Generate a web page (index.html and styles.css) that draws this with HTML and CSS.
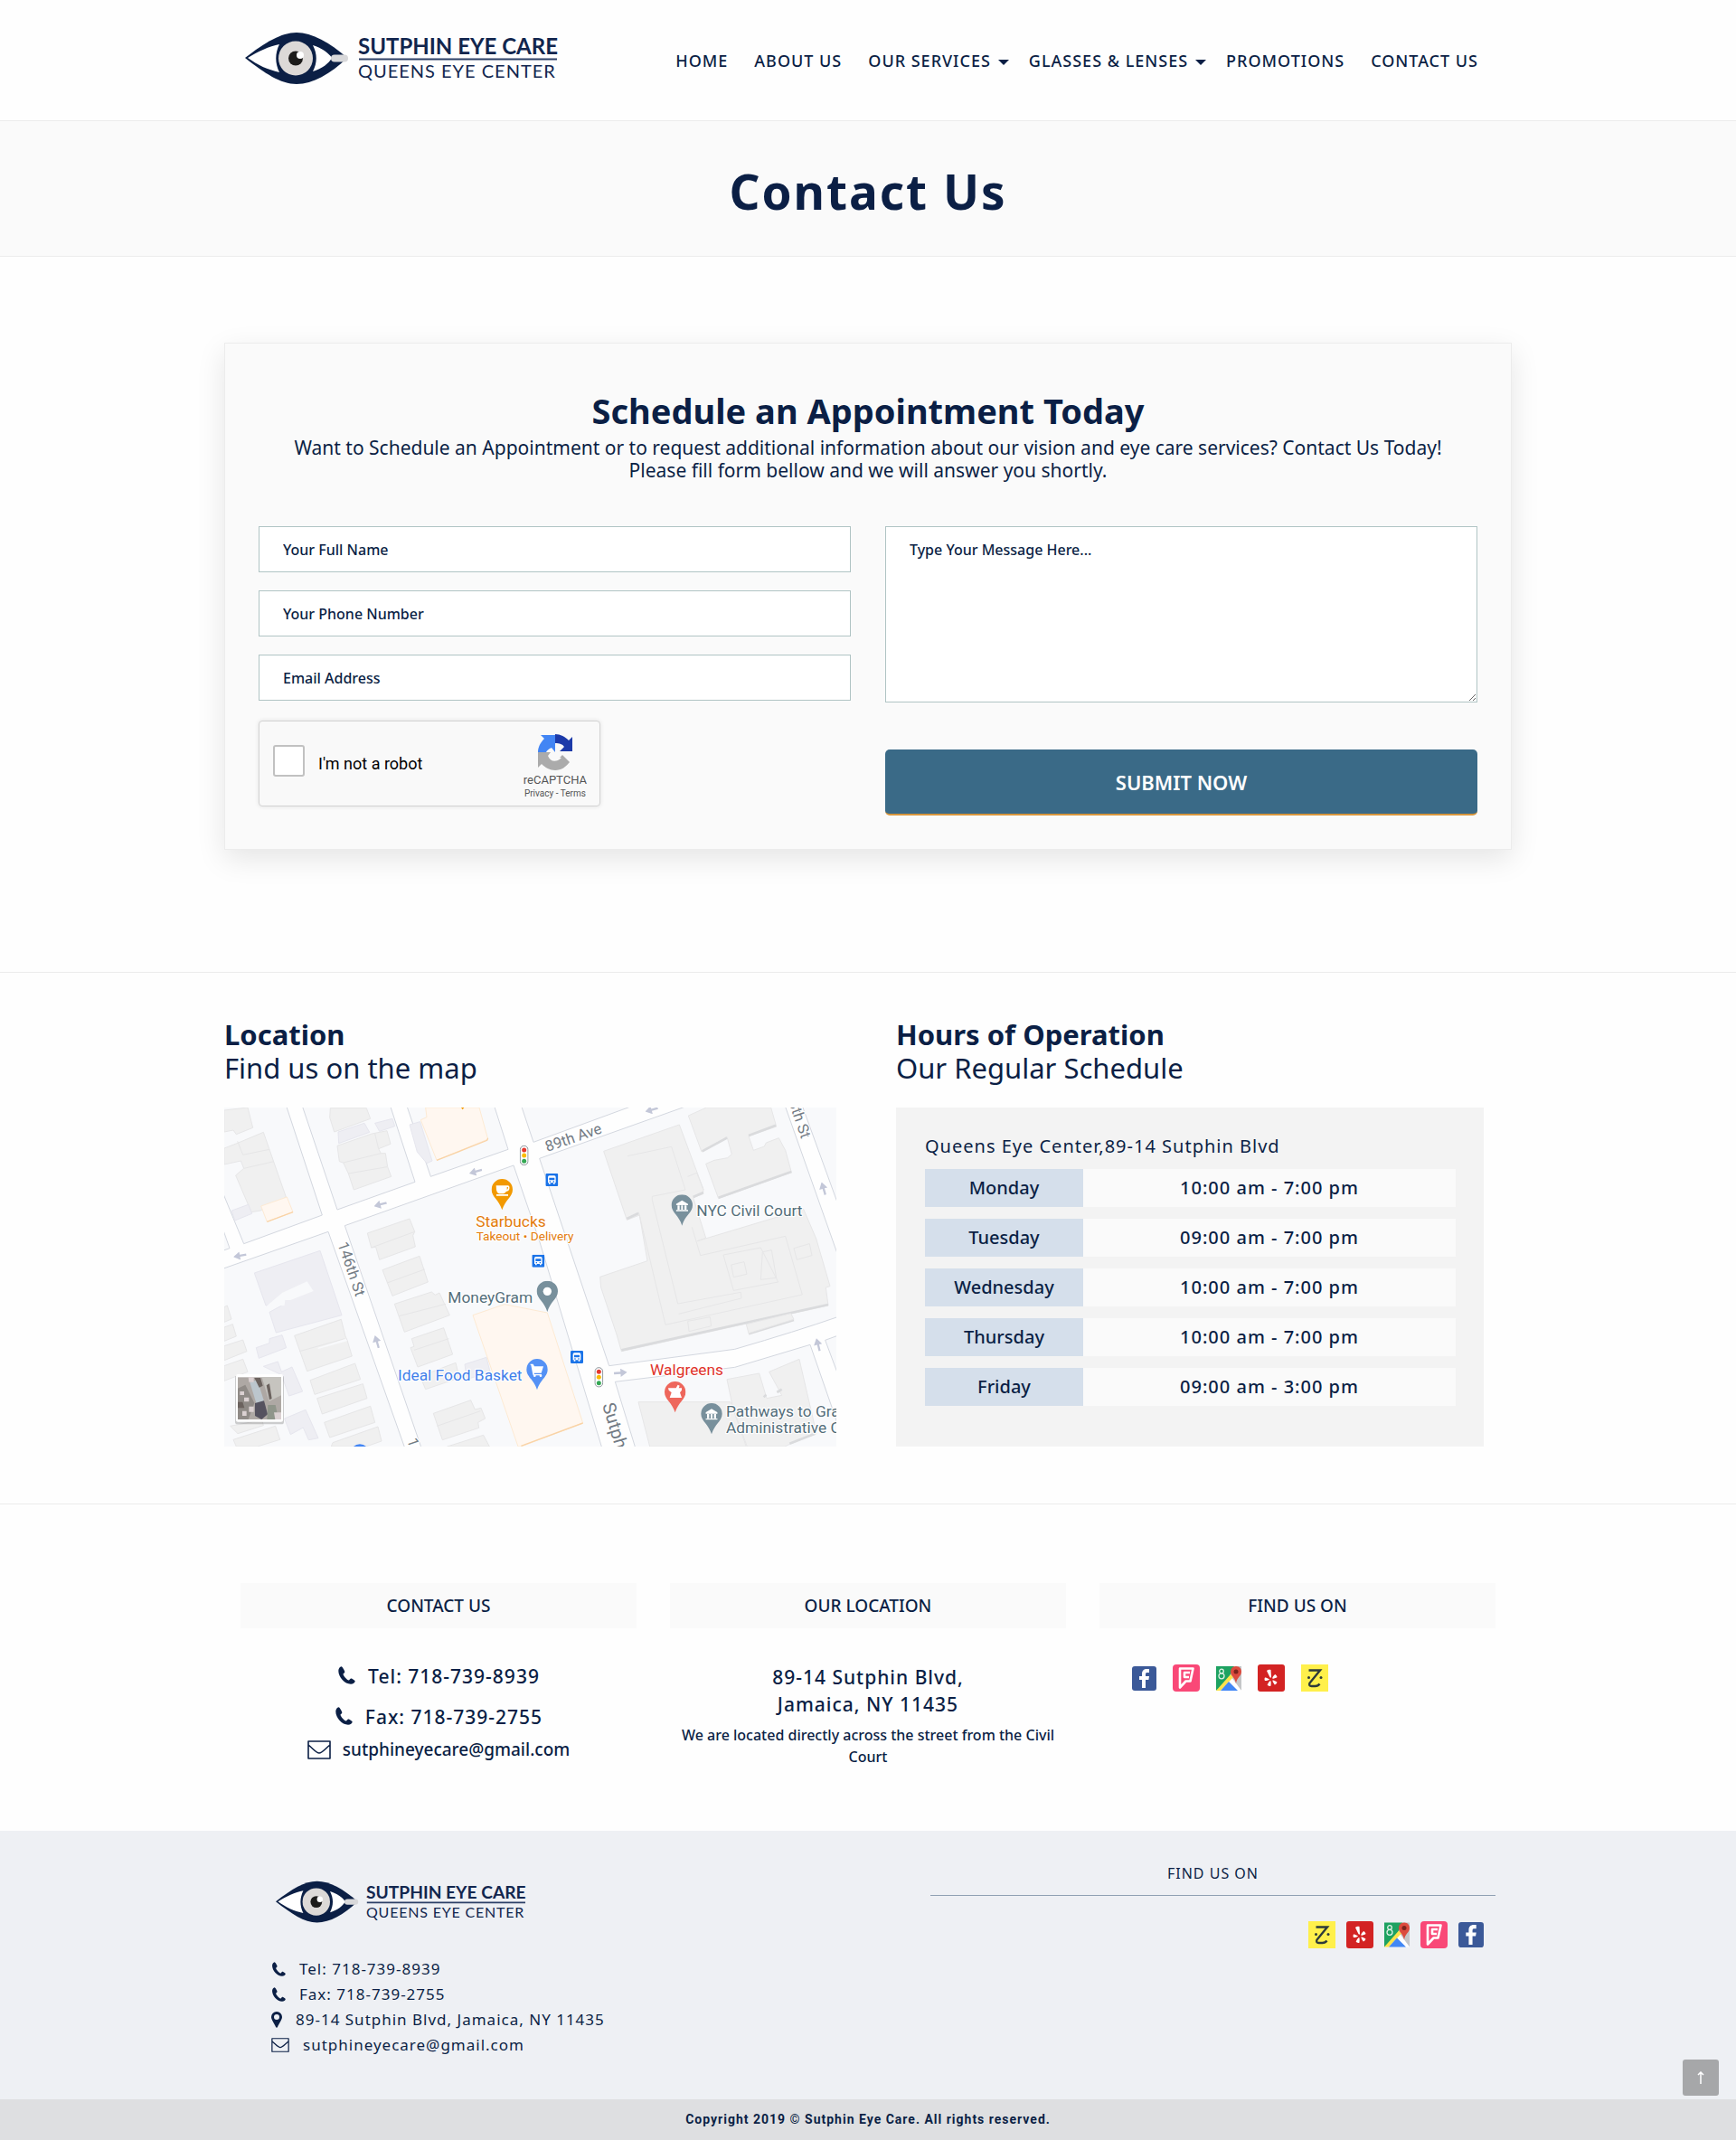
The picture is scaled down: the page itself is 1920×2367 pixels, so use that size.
FILE: index.html
```html
<!DOCTYPE html>
<html lang="en">
<head>
<meta charset="utf-8">
<meta name="viewport" content="width=device-width, initial-scale=1">
<title>Contact Us - Sutphin Eye Care</title>
<link rel="stylesheet" href="styles.css">
</head>
<body>
<svg class="sprite" width="0" height="0" aria-hidden="true">
  <symbol id="logo" viewBox="0 0 350 60">
    <path fill="#0b1f45" d="M0 29C22 12 40 1 57 1s37 11 56 28C94 47 75 58 57 58S22 46 0 29z"/>
    <path fill="#fff" d="M3 29C14 22 27 16 38 14c-5 10-5 21 0 31C25 42 14 37 3 29zM75 15c10 3 18 9 21 14-3 6-11 12-21 15 5-10 5-19 0-29z"/>
    <ellipse cx="56" cy="29.500" rx="19" ry="19" fill="#dcd9d7"/>
    <circle cx="56" cy="29.500" r="8" fill="#1c1b1a"/>
    <circle cx="61" cy="26" r="4" fill="#fff"/>
    <rect x="95" y="25.500" width="19" height="8" rx="4" fill="#d8d8da"/>
    <g font-family="Lato, sans-serif" fill="#12264e">
      <text x="125" y="25" font-size="24" font-weight="700">SUTPHIN EYE CARE</text>
      <text x="125" y="51" font-size="20" letter-spacing="1">QUEENS EYE CENTER</text>
    </g>
    <path d="M126 30.500h219" stroke="#2c3f66" stroke-width="2"/>
  </symbol>
  <symbol id="phone" viewBox="0 0 20 20">
    <path d="M4.500.3C3 .8 1.300 2.500 1.300 5c0 7 7 14.700 13.700 14.700 2.500 0 4.500-1.700 4.700-3.200.1-.8-4-3.200-4.700-2.900-.8.3-1.500 2-2.300 2-1.700-.3-6-5-6.200-6.900 0-.8 1.600-1.300 1.800-2.300C8.500 5.500 5.600.2 4.500.3z"/>
  </symbol>
  <symbol id="mail" viewBox="0 0 26 21">
    <path fill="none" stroke="currentColor" stroke-width="1.600" stroke-linejoin="round" d="M1 1h24v19H1zM1 5c6 5 9 9 12 9s6-4 12-9"/>
  </symbol>
  <symbol id="pin" viewBox="0 0 12 18">
    <path fill-rule="evenodd" d="M6 0a6 6 0 0 1 6 6c0 3-4 8-5 11-.4 1-1.600 1-2 0C4 14 0 9 0 6a6 6 0 0 1 6-6zm0 3a3 3 0 1 0 0 6 3 3 0 0 0 0-6z"/>
  </symbol>
  <symbol id="facebook" viewBox="0 0 27 27">
    <rect width="27" height="27" rx="3" fill="#3b5998"/>
    <path fill="#fff" d="M11 24V15H8v-4h3V8.500C11 5 13 3 16.500 3H19v4h-2c-1.500 0-2 .6-2 2v2h4l-.6 4H15v9z"/>
  </symbol>
  <symbol id="foursquare" viewBox="0 0 30 30">
    <rect width="30" height="30" rx="4" fill="#f94877"/>
    <path fill="none" stroke="#fff" stroke-width="2.600" stroke-linejoin="round" d="M8 4.500h14.500l-3 14h-5L8 25.500zM19 9h-6v5h5"/>
  </symbol>
  <symbol id="gmaps" viewBox="0 0 28 27">
    <path fill="#1da261" d="M0 0h20v12L0 27z"/>
    <path fill="#c4c6c8" d="M28 0v27L14 13 20 0z"/>
    <path fill="#fff" d="M17 12l11 15h-5L13 16z"/>
    <path fill="#fde34b" d="M16 9l3 3L5 27H0z"/>
    <path fill="#4187f5" d="M14 17l10 10H5z"/>
    <g fill="none" stroke="#e0f1e6" stroke-width="1.300"><circle cx="6" cy="5.500" r="2.300"/><circle cx="6" cy="10.800" r="3"/></g>
    <path fill="#dc4b3e" d="M22 0c4 0 6 3 6 6 0 5-5 6-6 13-1-7-6-8-6-13 0-3 2-6 6-6z"/>
    <circle cx="22" cy="6" r="2.500" fill="#7b241d"/>
  </symbol>
  <symbol id="yelp" viewBox="0 0 30 30">
    <rect width="30" height="30" rx="3" fill="#d32323"/>
    <g fill="#fff"><path d="M10 7c1-1 3.500-1.600 4.500-1l.5 8c0 1-1 1-1.500.3zM8 14.500c.5-.5 5 1.600 5 2s-4 2-5 1.500c-.6-.5-.6-3 0-3.500zM14 18c1 0 .8 5.500.3 6-.8.300-3.300-.600-3.500-1.200-.2-.8 2.500-4.800 3.200-4.800zM16.500 17.500c.8-.3 5 1.500 5 2.300-.2 1-1.800 2.600-2.500 2.600-.8-.2-3-4.500-2.500-4.900zM16.300 15.500c-.5-.7 2.200-4.500 3-4.600.7.100 2.200 2.300 2.200 3-.2.800-4.700 2.200-5.200 1.600z"/></g>
  </symbol>
  <symbol id="zocdoc" viewBox="0 0 30 30">
    <rect width="30" height="30" fill="#fff04b"/>
    <path fill="none" stroke="#2d3a3a" stroke-width="2.400" d="M8.500 6.500H21L9.500 20.500c-1 2.500 0 3.500 2 3.500h4c3 0 4-1 5-2.500"/>
    <circle cx="8.500" cy="14.500" r="1.500" fill="#2d3a3a"/><circle cx="22" cy="14.500" r="1.500" fill="#2d3a3a"/>
  </symbol>
  <symbol id="signal" viewBox="0 0 30 68">
    <rect x="2" y="2" width="26" height="64" rx="13" fill="#fff" stroke="#8a9299" stroke-width="3"/>
    <circle cx="15" cy="16" r="7.500" fill="#e5392f"/><circle cx="15" cy="34" r="7.500" fill="#fbbc04"/><circle cx="15" cy="53" r="7.500" fill="#34a853"/>
  </symbol>
  <symbol id="bus" viewBox="0 0 42 42">
    <rect width="42" height="42" rx="4" fill="#1a73e8"/>
    <path fill="#fff" fill-rule="evenodd" d="M8 12q0-5 5-5h16q5 0 5 5v19h-3v4h-5v-4H16v4h-5v-4H8zm4 2v8h18v-8zm1 11v4h4v-4zm12 0v4h4v-4z"/>
  </symbol>
  <symbol id="marker" viewBox="0 0 72 104">
    <path d="M36 0a35 35 0 0 1 35 35c0 25-26 35-35 68C27 70 1 60 1 35A35 35 0 0 1 36 0z"/>
  </symbol>
  <symbol id="court" viewBox="0 0 40 38">
    <path fill="#fff" d="M0 13L20 1l20 12v4H0zM5 18h7v14H5zm12 0h6v14h-6zm11 0h7v14h-7zM0 33h40v4H0z"/>
  </symbol>
  <symbol id="arrow" viewBox="0 0 44 28">
    <path fill="#c3c7d8" d="M0 14L22 0v10h22v7H22v11z"/>
  </symbol>
</svg>

<header class="site-header">
  <div class="container header-row">
    <a href="#" class="brand" aria-label="Sutphin Eye Care"><svg class="brand-logo"><use href="#logo"/></svg></a>
    <nav aria-label="Main">
      <ul class="menu">
        <li><a href="#">HOME</a></li>
        <li><a href="#">ABOUT US</a></li>
        <li><a href="#" class="has-sub">OUR SERVICES</a></li>
        <li><a href="#" class="has-sub">GLASSES &amp; LENSES</a></li>
        <li><a href="#">PROMOTIONS</a></li>
        <li><a href="#">CONTACT US</a></li>
      </ul>
    </nav>
  </div>
</header>

<main>
  <div class="banner"><h1>Contact Us</h1></div>

  <section class="container card">
    <h2>Schedule an Appointment Today</h2>
    <p class="lead">Want to Schedule an Appointment or to request additional information about our vision and eye care services? Contact Us Today!<br>Please fill form bellow and we will answer you shortly.</p>
    <form class="form">
      <div class="form-col">
        <input class="field" type="text" placeholder="Your Full Name" aria-label="Your Full Name">
        <input class="field" type="tel" placeholder="Your Phone Number" aria-label="Your Phone Number">
        <input class="field" type="email" placeholder="Email Address" aria-label="Email Address">
        <div class="captcha">
          <input type="checkbox" id="robot">
          <label for="robot">I'm not a robot</label>
          <div class="captcha-brand">
            <svg class="captcha-logo" viewBox="0 0 40 40" aria-hidden="true">
              <path fill="#1c3aa9" d="M20 0c6 0 11 3 15 7l4-4v16H25l5-5c-2-3-5-4-10-4z"/>
              <path fill="#4285f4" d="M20 1v19l-4-5c-3 1-5 3-6 5H1C1 14 4 9 8 5L4 1z"/>
              <path fill="#ababab" d="M1 20h9l5 0-3 4c2 5 6 7 11 5 2-1 3-2 4-3h-2l3-3 8 8c-4 5-9 9-16 9-6 0-11-3-15-7l-4 4z"/>
            </svg>
            <span class="captcha-name">reCAPTCHA</span>
            <span class="captcha-links"><a href="#">Privacy</a> - <a href="#">Terms</a></span>
          </div>
        </div>
      </div>
      <div class="form-col">
        <textarea class="field message" placeholder="Type Your Message Here..." aria-label="Type Your Message Here"></textarea>
        <button type="submit" class="submit">SUBMIT NOW</button>
      </div>
    </form>
  </section>

  <section class="find">
    <div class="container find-grid">
      <div>
        <h3>Location <span>Find us on the map</span></h3>
        <svg class="map" viewBox="0 3 2031 1125" preserveAspectRatio="xMidYMid slice" role="img" aria-label="Street map">
          <rect width="2031" height="1130" fill="#fefefe"/>
          <g fill="#f8f9fb" stroke="#d3d7df" stroke-width="3">
            <path d="M-5 -5H205L325 360 65 455 -5 285zM-5 405L18 470-5 478zM258 -5H550L633 250 375 342zM605 -5H895L942 142 685 232zM-5 538L345 415 600 1135H-5zM400 395L960 195 1044 440 1254 1135H655zM985 -5L1026 118 1362 -5zM1046 172L1544 -5H1860L2035 490V698Q1900 745 1694 805L1277 860zM1917 -5L2035 320V-5zM1297 913L1694 865 1944 790 2024 1020 2060 1135H1365zM1994 775L2035 760V885z"/>
          </g>
          <g fill="#f0f0f0" stroke="#e6e6e7" stroke-width="3">
            <path d="M0 12L78 3 95 70 40 92 30 78 0 84zM0 138L42 122 130 85 205 300 120 345 90 350 38 228 65 205 55 180 0 192zM350 36L365 84 485 40 472 5H352zM375 130L490 90 540 80 552 124 512 140 520 155 535 155 542 200 554 232 430 276 412 222 395 186 382 182zM475 420L615 372 632 415 626 428 634 465 515 508 503 466 488 468zM525 542L648 496 676 582 558 628zM565 655L688 615 700 625 714 618 748 692 598 748zM622 770L728 734 758 822 642 864 618 800 630 796zM650 895L768 850 780 900 668 938zM694 1018L818 974 832 1005 852 1000 866 1035 842 1048 845 1066 724 1106zM740 1128L860 1090 880 1128zM233 760L388 706 402 762 408 775 424 828 275 878zM285 908L434 852 452 905 300 955zM308 968L460 920 474 968 325 1020zM332 1048L485 994 500 1048 350 1098zM355 1128L360 1115 510 1062 522 1110 470 1128zM0 665L10 660 24 705 0 715zM0 732L28 722 40 762 0 778zM0 794L62 774 75 812 0 842zM0 860L62 838 78 880 0 910zM30 1105L170 1060 185 1105 110 1128H40zM20 1060L45 1085 130 1058 125 1040z"/>
            <path d="M1259 148L1510 60 1590 275 1588 290 1556 302 1598 436 1570 446 1922 340 1964 438 2010 596 1996 600 2004 660 1318 812 1302 756 1250 600 1247 565 1404 512 1378 360 1336 376zM1540 30L1600 3H1814L1832 66 1740 98 1756 145 1792 132 1798 120 1840 104 1862 145 1882 218 1640 305 1598 190 1626 178 1670 170 1684 158 1668 100 1584 150zM1668 905L1775 885 1800 968 1850 958 1808 880 1908 838 1965 1085 1876 1120 1860 1128H1735L1688 1000zM1374 980H1680L1732 1128H1412z"/>
            <path fill="none" d="M1338 164L1484 133 1530 276 1420 298 1420 310 1505 654 1714 616 1716 636 1508 688M1375 350L1464 724 1918 624 1862 430 1580 494 1552 400M1656 492L1780 468 1838 582 1690 610zM1682 525L1725 515 1734 556 1690 566zM1786 482L1816 476 1832 568 1780 574zM1890 470L1942 455 1950 494 1900 508zM1538 712L1612 698 1616 728 1542 746zM1538 232L1568 220 1590 275M500 90L512 140M44 115L62 160 150 142M65 205L165 182M395 186L520 155M412 222L540 200M488 468L632 415M540 585L665 540M580 695L735 655M630 808L745 770M706 1060L850 1010M250 812L400 770"/>
          </g>
          <g fill="none" stroke="#dadbdd" stroke-width="8">
            <path d="M1318 808L2004 657M1336 372L1374 354M1640 302L1882 216M1740 96L1830 62M1586 148L1668 104M1740 754L1890 708M1556 300L1590 285M1876 1118L1960 1085M1790 964L1798 956M1834 948L1850 938"/>
          </g>
          <path fill="#f0f0f0" stroke="#e6e6e7" stroke-width="3" d="M1732 722L1880 686 1890 706 1740 752z"/>
          <g fill="#eeeef3" stroke="#e6e6ee" stroke-width="3">
            <path d="M100 552L318 478 390 692 330 708 172 750 150 682 200 655 138 660zM378 84L465 55 482 85 380 122zM500 55L558 40 566 65 515 82zM615 60L650 50 690 180 672 188 640 150zM25 345L80 325 92 355 35 378zM106 800L150 785 150 770 192 758 206 800 115 835zM130 862L178 846 190 880 225 864 260 945 215 960 190 890zM200 1035L270 1006 312 1100 280 1106 262 1065 220 1088zM798 855L870 832 882 880 805 905z"/>
          </g>
          <path fill="#f8f9fb" d="M192 618L275 580 296 612 220 642 202 642 200 660 138 664z"/>
          <path fill="#f8f9fb" d="M310 800L404 770 408 778 312 804z"/>
          <g fill="#fff7f0" stroke="#fdead3" stroke-width="3">
            <path d="M122 330L208 300 228 350 142 382zM652 44L672 35 668 3H846L875 108 705 178zM825 692L930 656 1072 684 1190 1050 985 1128H975z"/>
          </g>
          <path fill="none" stroke="#f9d3a6" stroke-width="4" d="M142 382L228 350M705 178L872 112 875 104M985 1126L1190 1050"/>
          <use href="#arrow" x="-22" y="-14" width="44" height="28" transform="translate(52 495) rotate(-10)"/>
          <use href="#arrow" x="-22" y="-14" width="44" height="28" transform="translate(518 325) rotate(-15)"/>
          <use href="#arrow" x="-22" y="-14" width="44" height="28" transform="translate(834 216) rotate(-15)"/>
          <use href="#arrow" x="-22" y="-14" width="44" height="28" transform="translate(1418 11) rotate(-15)"/>
          <use href="#arrow" x="-22" y="-14" width="44" height="28" transform="translate(506 780) rotate(74)"/>
          <use href="#arrow" x="-22" y="-14" width="44" height="28" transform="translate(1988 272) rotate(74)"/>
          <use href="#arrow" x="-22" y="-14" width="44" height="28" transform="translate(1970 790) rotate(76)"/>
          <use href="#arrow" x="-22" y="-14" width="44" height="28" transform="translate(1315 883) rotate(176)"/>
          <use href="#signal" x="980" y="128" width="30" height="68"/>
          <use href="#signal" x="1228" y="864" width="30" height="68"/>
          <use href="#bus" x="1066" y="222" width="42" height="42"/>
          <use href="#bus" x="1021" y="491" width="42" height="42"/>
          <use href="#bus" x="1149" y="810" width="42" height="42"/>
          <use href="#marker" x="886" y="240" width="72" height="104" fill="#f29900"/>
          <path fill="#fff" fill-rule="evenodd" d="M902 262h40q6 2 4 12-2 8-10 7-4 7-10 8h-14q-8-3-9-12zm36 5v9q4-2 4-9zM903 291h39v5h-39z"/>
          <use href="#marker" x="1036" y="578" width="72" height="104" fill="#78909c"/><circle cx="1072" cy="613" r="14" fill="#fff"/>
          <use href="#marker" x="1002" y="837" width="72" height="104" fill="#5491f5"/>
          <path fill="#fff" d="M1016 854h9l4 8h30l-7 22h-24l1 4h24v4h-28l-2-8-5-26h-2z"/><circle cx="1030" cy="893" r="4" fill="#fff"/><circle cx="1050" cy="893" r="4" fill="#fff"/>
          <use href="#marker" x="1483" y="292" width="72" height="104" fill="#78909c"/><use href="#court" x="1499" y="310" width="40" height="38"/>
          <use href="#marker" x="1581" y="984" width="72" height="104" fill="#78909c"/><use href="#court" x="1597" y="1002" width="40" height="38"/>
          <use href="#marker" x="1460" y="912" width="72" height="104" fill="#ee675c"/>
          <path fill="#fff" d="M1473 934h26l6-11 6 3-3 8h10v7l-6 8 6 17h-40l6-17-9-8z"/>
          <circle cx="450" cy="1152" r="32" fill="#4285f4"/>
          <path fill="#f29900" d="M786 3h10l-5 7z"/>
          <g font-family="Roboto, sans-serif" font-size="52" stroke="#fff" stroke-width="7" stroke-linejoin="round" paint-order="stroke">
            <text x="835" y="400" fill="#e37b0b">Starbucks</text>
            <text x="836" y="443" fill="#e37b0b" font-size="41">Takeout • Delivery</text>
            <text x="742" y="650" fill="#546e7a">MoneyGram</text>
            <text x="576" y="908" fill="#3f80ea">Ideal Food Basket</text>
            <text x="1413" y="892" fill="#e0332b">Walgreens</text>
            <text x="1567" y="364" fill="#546e7a">NYC Civil Court</text>
            <text x="1665" y="1030" fill="#546e7a">Pathways to Graduation</text>
            <text x="1665" y="1082" fill="#546e7a">Administrative Office</text>
            <g fill="#737b84" font-size="50">
              <text transform="translate(1072 150) rotate(-19)">89th Ave</text>
              <text transform="translate(376 456) rotate(71)">146th St</text>
              <text transform="translate(606 1106) rotate(71)">146th St</text>
              <text transform="translate(1854 -68) rotate(71)">148th St</text>
              <text transform="translate(1254 990) rotate(73)" font-size="60">Sutphin Blvd</text>
            </g>
          </g>
          <g>
            <rect x="36" y="892" width="162" height="162" rx="8" fill="#000" opacity=".18"/>
            <rect x="39" y="888" width="156" height="158" rx="6" fill="#fff"/>
            <rect x="45" y="898" width="144" height="140" fill="#aea8a4"/>
            <path fill="#c6c4bf" d="M125 898h64v60l-40 20z"/>
            <path fill="#8f8a86" d="M45 935l25-12 30 60-20 55H45z"/>
            <path fill="#bcc6cd" d="M85 915l25-8 22 70-22 20z"/>
            <path fill="#55525f" d="M102 984l30-8 12 45-20 17-22-12z"/>
            <path fill="#8f958a" d="M145 990l25 0 10 48h-38z"/>
            <path fill="#dbd1d2" d="M80 898h18v16H82zM52 945h14v12H52zM66 965h16v14H66zM82 995h16v18H82zM165 1015h24v23h-20zM60 1010h14v16H60z"/>
            <path fill="#6b625e" d="M100 900h20l8 26-12 6zM45 980h16l6 20H45zM140 925l10-6 8 50-8 4z"/>
          </g>
        </svg>
      </div>
      <div class="hours">
        <h3>Hours of Operation <span>Our Regular Schedule</span></h3>
        <div class="hours-panel">
          <p>Queens Eye Center,89-14 Sutphin Blvd</p>
          <table>
            <tr><th scope="row">Monday</th><td>10:00 am - 7:00 pm</td></tr>
            <tr><th scope="row">Tuesday</th><td>09:00 am - 7:00 pm</td></tr>
            <tr><th scope="row">Wednesday</th><td>10:00 am - 7:00 pm</td></tr>
            <tr><th scope="row">Thursday</th><td>10:00 am - 7:00 pm</td></tr>
            <tr><th scope="row">Friday</th><td>09:00 am - 3:00 pm</td></tr>
          </table>
        </div>
      </div>
    </div>
  </section>

  <section class="info">
    <div class="container info-grid">
      <div>
        <h4>CONTACT US</h4>
        <ul class="contact-list">
          <li><a href="#"><svg class="phone"><use href="#phone"/></svg>Tel: 718-739-8939</a></li>
          <li><a href="#"><svg class="phone"><use href="#phone"/></svg>Fax: 718-739-2755</a></li>
          <li class="mail-row"><a href="#"><svg class="mail"><use href="#mail"/></svg>sutphineyecare@gmail.com</a></li>
        </ul>
      </div>
      <div>
        <h4>OUR LOCATION</h4>
        <address>89-14 Sutphin Blvd,<br>Jamaica, NY 11435</address>
        <p class="note">We are located directly across the street from the Civil Court</p>
      </div>
      <div>
        <h4>FIND US ON</h4>
        <div class="social">
          <a href="#" aria-label="Facebook"><svg width="27" height="27"><use href="#facebook"/></svg></a>
          <a href="#" aria-label="Foursquare"><svg width="30" height="30"><use href="#foursquare"/></svg></a>
          <a href="#" aria-label="Google Maps"><svg width="28" height="27"><use href="#gmaps"/></svg></a>
          <a href="#" aria-label="Yelp"><svg width="30" height="30"><use href="#yelp"/></svg></a>
          <a href="#" aria-label="Zocdoc"><svg width="30" height="30"><use href="#zocdoc"/></svg></a>
        </div>
      </div>
    </div>
  </section>
</main>

<footer class="site-footer">
  <div class="container footer-grid">
    <div>
      <svg class="footer-logo" role="img" aria-label="Sutphin Eye Care"><use href="#logo"/></svg>
      <ul class="footer-list">
        <li><a href="#"><svg width="16" height="16"><use href="#phone"/></svg>Tel: 718-739-8939</a></li>
        <li><a href="#"><svg width="16" height="16"><use href="#phone"/></svg>Fax: 718-739-2755</a></li>
        <li><a href="#"><svg width="12" height="18"><use href="#pin"/></svg>89-14 Sutphin Blvd, Jamaica, NY 11435</a></li>
        <li><a href="#"><svg width="20" height="16"><use href="#mail"/></svg>sutphineyecare@gmail.com</a></li>
      </ul>
    </div>
    <div>
      <h5>FIND US ON</h5>
      <div class="social social-footer">
        <a href="#" aria-label="Zocdoc"><svg width="30" height="30"><use href="#zocdoc"/></svg></a>
        <a href="#" aria-label="Yelp"><svg width="30" height="30"><use href="#yelp"/></svg></a>
        <a href="#" aria-label="Google Maps"><svg width="28" height="28"><use href="#gmaps"/></svg></a>
        <a href="#" aria-label="Foursquare"><svg width="30" height="30"><use href="#foursquare"/></svg></a>
        <a href="#" aria-label="Facebook"><svg width="28" height="28"><use href="#facebook"/></svg></a>
      </div>
    </div>
  </div>
  <p class="copyright">Copyright 2019 © Sutphin Eye Care. All rights reserved.</p>
</footer>
<button type="button" class="to-top" aria-label="Back to top"><svg width="8" height="14" viewBox="0 0 8 14"><path d="M4 14V2M1 4l3-3 3 3" fill="none" stroke="#fff" stroke-width="1.500"/></svg></button>
</body>
</html>
```
FILE: styles.css
```css
* { box-sizing: border-box; }

body {
  margin: 0;
  background: #fefefe;
  color: #0b1f45;
  font-family: "Noto Sans", "Open Sans", sans-serif;
  font-size: 16px;
}

h1, h2, h3, h4, h5, p, ul { margin: 0; padding: 0; }
ul { list-style: none; }
a { color: inherit; text-decoration: none; }
svg { display: block; fill: currentColor; }
.sprite { position: absolute; }

.container {
  width: 100%;
  max-width: 1424px;
  margin: 0 auto;
}

/* Header */
.site-header { border-bottom: 1px solid #ececec; }
.header-row {
  display: flex;
  align-items: center;
  justify-content: space-between;
  min-height: 133px;
  padding: 0 30px 0 23px;
}
.brand { margin-bottom: 4px; }
.brand-logo { width: 350px; height: 60px; }
.menu { display: flex; gap: 22px; }
.menu a {
  display: flex;
  align-items: center;
  padding-right: 7px;
  font-size: 18px;
  font-weight: 500;
  letter-spacing: 1px;
  white-space: nowrap;
}
.menu .has-sub { padding-right: 0; }
.has-sub::after {
  content: "";
  margin: 4px 0 0 8px;
  border: 6px solid transparent;
  border-top-color: currentColor;
  border-bottom: 0;
}

/* Page title */
.banner {
  padding: 41px 0 35px;
  background: #fafafa;
  border-bottom: 1px solid #ececec;
  text-align: center;
}
.banner h1 {
  font-size: 53px;
  line-height: 73px;
  letter-spacing: 2px;
}

/* Appointment form */
.card {
  margin: 95px auto 135px;
  padding: 53px 37px 37px;
  background: #fafafa;
  border: 1px solid #ececec;
  box-shadow: 0 10px 30px rgba(0, 0, 0, .1);
}
.card h2 {
  font-size: 38px;
  line-height: 42px;
  text-align: center;
}
.lead {
  margin: 8px 0 49px;
  font-size: 21px;
  font-weight: 400;
  line-height: 25px;
  text-align: center;
}
.form {
  display: grid;
  grid-template-columns: 1fr 1fr;
  gap: 38px;
}
.form-col { display: flex; flex-direction: column; gap: 20px; }
.field {
  width: 100%;
  height: 51px;
  padding: 0 26px;
  border: 1px solid #b0c4c4;
  border-radius: 0;
  background: #fff;
  color: #0b1f45;
  font: 500 16px/24px "Noto Sans", sans-serif;
}
.field::placeholder { color: #0b1f45; opacity: 1; }
.message {
  height: 195px;
  padding: 13px 26px;
}
.submit {
  height: 73px;
  margin-top: 32px;
  border: 0;
  border-bottom: 2px solid #d7963c;
  border-radius: 5px;
  background: #3a6a87;
  color: #fff;
  font: 600 22px/30px "Noto Sans", sans-serif;
}

.captcha {
  display: flex;
  align-items: center;
  width: 378px;
  height: 95px;
  margin-top: 2px;
  padding: 0 14px 0 15px;
  border: 1px solid #d3d3d3;
  border-radius: 4px;
  background: #f9f9f9;
  box-shadow: 0 0 5px rgba(0, 0, 0, .1);
  color: #000;
  font-family: Roboto, sans-serif;
}
.captcha input {
  width: 35px;
  height: 35px;
  margin: 0 15px 6px 0;
  appearance: none;
  border: 2px solid #c1c1c1;
  border-radius: 3px;
  background: #fff;
}
.captcha label { flex: 1; font-size: 18px; }
.captcha-brand {
  display: flex;
  flex-direction: column;
  align-items: center;
  padding-top: 5px;
  color: #555;
}
.captcha-logo { width: 40px; height: 40px; }
.captcha-name { font-size: 13px; line-height: 21px; }
.captcha-links { font-size: 10px; line-height: 10px; }

/* Location and hours */
.find { padding: 50px 0 63px; border-top: 1px solid #ececec; }
.find-grid {
  display: grid;
  grid-template-columns: 677fr 650fr;
  gap: 66px;
  padding-right: 31px;
}
h3 { margin-bottom: 25px; font-size: 31px; line-height: 37px; }
h3 span { display: block; font-weight: 400; }
.map { width: 100%; height: 375px; }
.hours { display: flex; flex-direction: column; }
.hours-panel {
  flex: 1;
  padding: 30px 31px 28px 32px;
  background: #f3f3f3;
  font-size: 20px;
}
.hours-panel p { font-weight: 400; line-height: 25px; letter-spacing: 1px; }
.hours-panel table { width: 100%; border-spacing: 0 13px; }
.hours-panel th, .hours-panel td {
  height: 42px;
  padding: 0;
  font-weight: 500;
  line-height: 28px;
  text-align: center;
}
.hours-panel th { width: 175px; background: #d5dfeb; }
.hours-panel td { background: #fafafa; letter-spacing: 1px; }

/* Contact columns */
.info { padding: 87px 0 70px; border-top: 1px solid #ececec; }
.info-grid {
  display: grid;
  grid-template-columns: repeat(3, 1fr);
  gap: 37px;
  padding: 0 18px;
  text-align: center;
}
h4 {
  margin-bottom: 31px;
  background: #fafafa;
  font-size: 19px;
  font-weight: 500;
  line-height: 50px;
}
.contact-list a {
  display: flex;
  align-items: center;
  justify-content: center;
  gap: 14px;
  font-size: 21px;
  font-weight: 500;
  line-height: 45px;
  letter-spacing: 1px;
}
.contact-list .mail-row a { gap: 13px; font-size: 19px; line-height: 27px; letter-spacing: 0; }
.phone { width: 20px; height: 20px; margin-bottom: 4px; }
.mail { width: 26px; height: 21px; }
address {
  margin-top: 39px;
  font-size: 21px;
  font-style: normal;
  font-weight: 500;
  line-height: 30px;
  letter-spacing: 1px;
}
.note { margin-top: 7px; font-weight: 500; line-height: 24px; }
.social {
  display: flex;
  align-items: center;
  gap: 18px;
  padding: 9px 0 0 36px;
}

/* Footer */
.site-footer { background: #eef0f4; }
.footer-grid {
  display: grid;
  grid-template-columns: 625px 625px;
  justify-content: space-between;
  padding: 33px 18px 46px 52px;
}
.footer-logo { width: 280px; height: 48px; margin: 22px 0 36px 5px; }
.footer-list a {
  display: flex;
  align-items: center;
  gap: 15px;
  font-size: 17px;
  line-height: 28px;
  letter-spacing: 1px;
}
.footer-grid h5 {
  padding-bottom: 10px;
  border-bottom: 1px solid #8fa0b3;
  font-size: 16px;
  font-weight: 400;
  line-height: 28px;
  letter-spacing: 1px;
  text-align: center;
}
.social-footer { justify-content: flex-end; gap: 12px; padding: 28px 13px 0 0; }
.copyright {
  background: #dedfe1;
  font: 700 14px/45px Roboto, sans-serif;
  letter-spacing: 1px;
  text-align: center;
}
.to-top {
  position: fixed;
  right: 19px;
  bottom: 49px;
  display: grid;
  place-items: center;
  width: 40px;
  height: 40px;
  padding: 0;
  border: 0;
  border-radius: 3px;
  background: #a6a7a9;
}
```
